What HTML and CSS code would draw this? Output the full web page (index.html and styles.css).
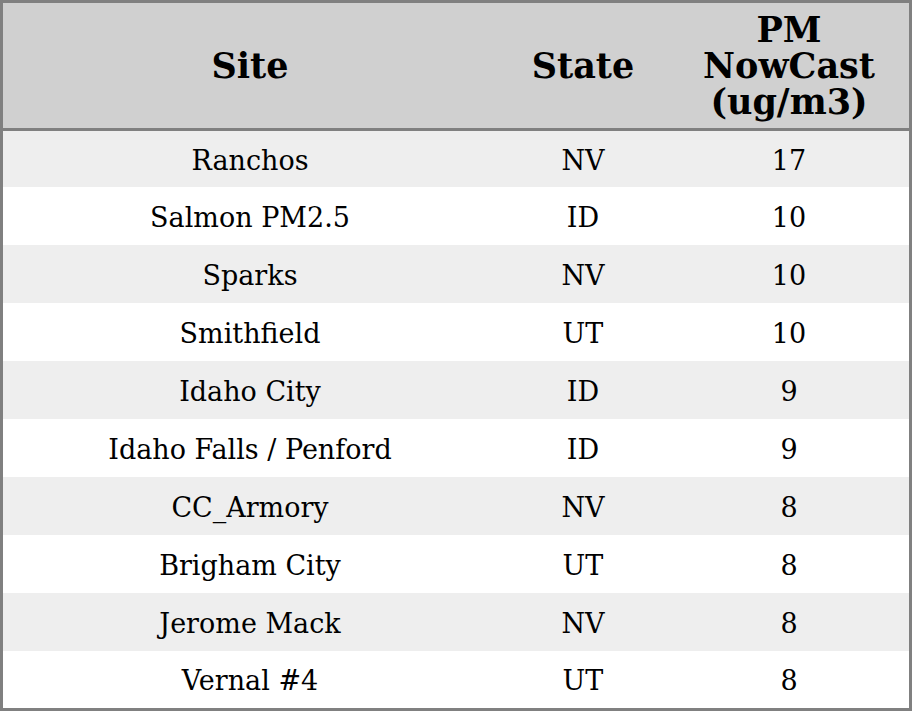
FILE: index.html
```html
<!DOCTYPE html>
<html>
<head>
<meta charset="utf-8">
<link rel="stylesheet" href="styles.css">
</head>
<body>
<table class="aq">
  <colgroup>
    <col class="c-site">
    <col class="c-state">
    <col class="c-pm">
  </colgroup>
  <thead>
    <tr><th>Site</th><th>State</th><th>PM<br>NowCast<br>(ug/m3)</th></tr>
  </thead>
  <tbody>
    <tr><td>Ranchos</td><td>NV</td><td>17</td></tr>
    <tr><td>Salmon PM2.5</td><td>ID</td><td>10</td></tr>
    <tr><td>Sparks</td><td>NV</td><td>10</td></tr>
    <tr><td>Smithfield</td><td>UT</td><td>10</td></tr>
    <tr><td>Idaho City</td><td>ID</td><td>9</td></tr>
    <tr><td>Idaho Falls / Penford</td><td>ID</td><td>9</td></tr>
    <tr><td>CC_Armory</td><td>NV</td><td>8</td></tr>
    <tr><td>Brigham City</td><td>UT</td><td>8</td></tr>
    <tr><td>Jerome Mack</td><td>NV</td><td>8</td></tr>
    <tr><td>Vernal #4</td><td>UT</td><td>8</td></tr>
  </tbody>
</table>
</body>
</html>
```
FILE: styles.css
```css
html, body {
  margin: 0;
  padding: 0;
  background: #ffffff;
}
.aq {
  width: 912px;
  height: 711px;
  table-layout: fixed;
  border-collapse: separate;
  border-spacing: 0;
  border: 3px solid #808080;
  font-family: "DejaVu Serif", serif;
  color: #000000;
  box-sizing: border-box;
}
.c-site { width: 494px; }
.c-state { width: 172px; }
.c-pm { width: 240px; }
.aq th {
  background: #d0d0d0;
  font-weight: bold;
  font-size: 35px;
  line-height: 36px;
  height: 128px;
  padding: 0;
  text-align: center;
  vertical-align: middle;
  border-bottom: 3px solid #808080;
  box-sizing: border-box;
}
.aq td {
  font-size: 27px;
  line-height: 30px;
  padding: 3px 0 0 0;
  text-align: center;
  vertical-align: middle;
  height: 58px;
  box-sizing: border-box;
}
.aq tbody tr:first-child td { height: 56px; }
.aq tbody tr:last-child td { height: 57px; }
.aq tbody tr:nth-child(odd) { background: #eeeeee; }
.aq tbody tr:nth-child(even) { background: #ffffff; }
```
